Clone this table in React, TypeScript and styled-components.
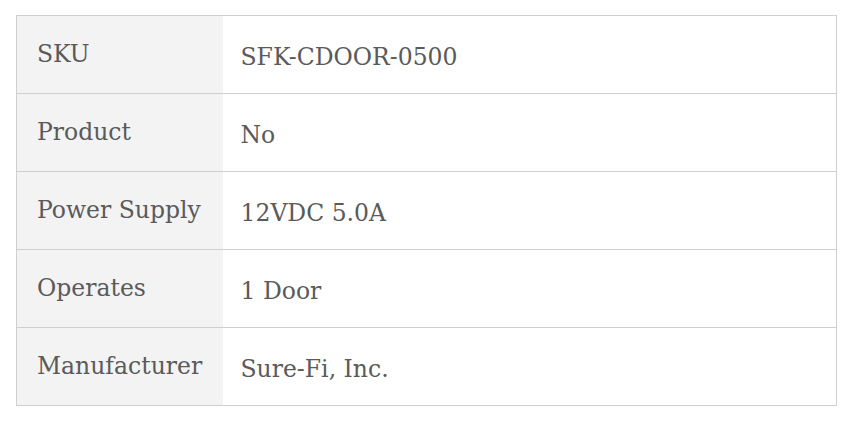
import React from "react";
import styled, { createGlobalStyle } from "styled-components";

const Global = createGlobalStyle`
  html, body { margin: 0; padding: 0; background: #fff; }
  body { font-family: "DejaVu Serif", "Liberation Serif", serif; }
`;

const Wrap = styled.div`
  padding: 15px 20px 0 16px;
`;

const Table = styled.table`
  width: 821px;
  border-collapse: collapse;
  border: 1px solid #cfcfcf;
  color: #5a5a5a;
  font-size: 23.5px;
`;

const Row = styled.tr`
  border-top: 1px solid #cfcfcf;
  height: 78px;
`;

const Label = styled.th`
  width: 206px;
  box-sizing: border-box;
  background: #f3f3f3;
  font-weight: normal;
  text-align: left;
  padding: 0 0 2px 20px;
  vertical-align: middle;
  white-space: nowrap;
`;

const Value = styled.td`
  padding: 4px 0 0 18px;
  vertical-align: middle;
`;

const rows: [string, string][] = [
  ["SKU", "SFK-CDOOR-0500"],
  ["Product", "No"],
  ["Power Supply", "12VDC 5.0A"],
  ["Operates", "1 Door"],
  ["Manufacturer", "Sure-Fi, Inc."],
];

export default function App() {
  return (
    <>
      <Global />
      <Wrap>
        <Table>
          <tbody>
            {rows.map(([k, v]) => (
              <Row key={k}>
                <Label>{k}</Label>
                <Value>{v}</Value>
              </Row>
            ))}
          </tbody>
        </Table>
      </Wrap>
    </>
  );
}
